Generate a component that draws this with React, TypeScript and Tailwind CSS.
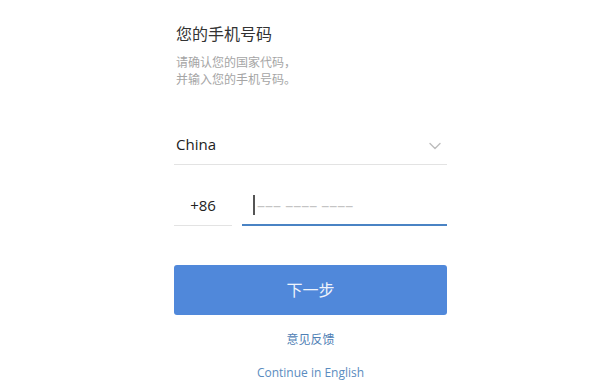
import React from 'react';

const FONT = "font-['Open_Sans','Noto_Sans_CJK_SC',sans-serif]";

function Chevron() {
  return (
    <svg width="12" height="8" viewBox="0 0 12 8" fill="none" className="mt-[4px] text-[#bdbdbd]">
      <path d="M1 1.5l5 5 5-5" stroke="currentColor" strokeWidth="1.4" strokeLinecap="round" strokeLinejoin="round" />
    </svg>
  );
}

export default function App() {
  return (
    <div className={`h-[382px] w-[600px] overflow-hidden bg-white ${FONT}`}>
      <div className="flex justify-center pl-[21px]">
        <div className="flex w-[273px] flex-col pt-[24px]">
          <h1 className="pl-[2px] text-[16px] leading-[20px] font-normal text-[#333]">您的手机号码</h1>
          <p className="mt-[10px] pl-[2px] text-[12px] leading-[17px] text-[#a5a5a5]">
            请确认您的国家代码，
            <br />
            并输入您的手机号码。
          </p>

          <div className="mt-[36px] flex h-[41px] items-center justify-between border-b border-[#e3e3e3] pl-[2px] pr-[6px]">
            <span className="text-[15px] text-[#222]">China</span>
            <Chevron />
          </div>

          <div className="mt-[20px] flex gap-[10px]">
            <div className="flex h-[41px] w-[58px] items-center justify-center border-b border-[#e3e3e3] text-[15px] text-[#222]">
              +86
            </div>
            <div className="flex h-[41px] flex-1 items-center border-b-2 border-[#4a83c4] pl-[11px]">
              <span className="h-[20px] w-[2px] bg-[#555]" />
              <span className="ml-[2px] text-[16px] text-[#c4c4c4]">––– –––– ––––</span>
            </div>
          </div>

          <button className="mt-[39px] flex h-[50px] items-center justify-center rounded-[3px] bg-[#5088da] text-[16px] text-[#eef3fb]">
            下一步
          </button>

          <div className="mt-[16px] text-center text-[12px] leading-[17px] text-[#4f80b5]">意见反馈</div>
          <div className="mt-[16px] text-center text-[12px] leading-[17px] text-[#5a8cc0]">Continue in English</div>
        </div>
      </div>
    </div>
  );
}
